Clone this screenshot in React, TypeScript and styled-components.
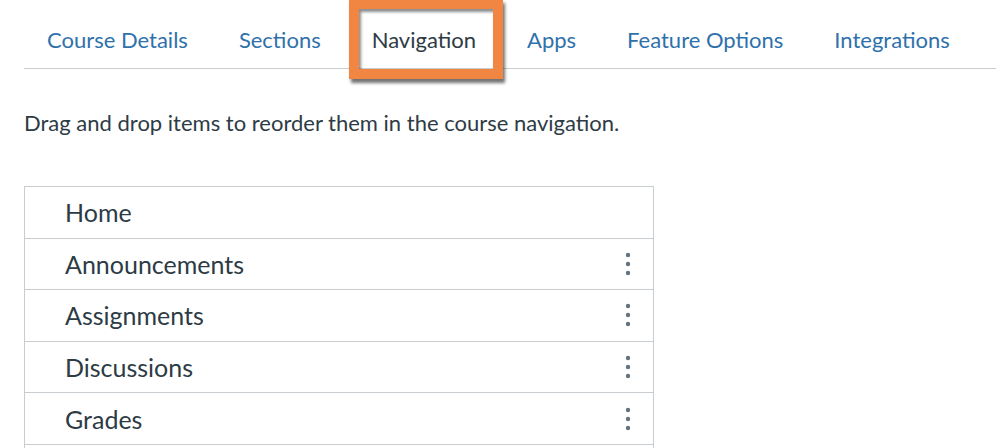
import styled, { createGlobalStyle } from 'styled-components';

const GlobalStyle = createGlobalStyle`
  html, body {
    margin: 0;
    padding: 0;
    background: #fff;
  }
  body {
    font-family: Lato, "Noto Sans", sans-serif;
    color: #2d3b45;
    overflow: hidden;
  }
`;

const Page = styled.div`
  padding-left: 24px;
  width: 972px;
  height: 448px;
  overflow: hidden;
`;

const TabBar = styled.nav`
  display: flex;
  padding-top: 24px;
  border-bottom: 1px solid #c7cdd1;
`;

const Tab = styled.a<{ $active?: boolean }>`
  position: relative;
  display: block;
  padding: 0 25.5px 12px;
  font-size: 22px;
  line-height: 32px;
  text-decoration: none;
  color: ${(p) => (p.$active ? '#2d3b45' : '#2f71ab')};
  white-space: nowrap;

  &:first-child {
    padding-left: 23px;
  }
`;

// annotation frame drawn over the active tab
const Highlight = styled.span`
  position: absolute;
  left: 3px;
  right: -1px;
  top: -25px;
  height: 80px;
  box-sizing: border-box;
  border: 10px solid #f08641;
  box-shadow: 2px 4px 3px rgba(0, 0, 0, 0.55), inset 2px 3px 3px rgba(0, 0, 0, 0.45);
  pointer-events: none;
`;

const Intro = styled.p`
  margin: 39px 0 0;
  font-size: 22px;
  line-height: 30px;
`;

const NavList = styled.ul`
  list-style: none;
  margin: 48px 0 0;
  padding: 0;
  width: 628px;
  border: 1px solid #c7cdd1;
  border-bottom: none;
`;

const NavItem = styled.li`
  display: flex;
  align-items: center;
  justify-content: space-between;
  height: 50.6px;
  padding: 0 22px 0 40px;
  border-bottom: 1px solid #c7cdd1;
  font-size: 25px;
  color: #2d3b45;
`;

const Kebab = styled.svg`
  width: 6px;
  height: 24px;
  flex: none;
`;

const KebabIcon = () => (
  <Kebab viewBox="0 0 6 24">
    <circle cx="3" cy="3" r="2.2" fill="#66737d" />
    <circle cx="3" cy="12" r="2.2" fill="#66737d" />
    <circle cx="3" cy="21" r="2.2" fill="#66737d" />
  </Kebab>
);

const tabs = ['Course Details', 'Sections', 'Navigation', 'Apps', 'Feature Options', 'Integrations'];
const items = ['Home', 'Announcements', 'Assignments', 'Discussions', 'Grades'];

export default function App() {
  return (
    <>
      <GlobalStyle />
      <Page>
        <TabBar>
          {tabs.map((t) => (
            <Tab key={t} href="#" $active={t === 'Navigation'}>
              {t}
              {t === 'Navigation' && <Highlight />}
            </Tab>
          ))}
        </TabBar>
        <Intro>Drag and drop items to reorder them in the course navigation.</Intro>
        <NavList>
          {items.map((it, i) => (
            <NavItem key={it}>
              <span>{it}</span>
              {i > 0 && <KebabIcon />}
            </NavItem>
          ))}
          <NavItem aria-hidden />
        </NavList>
      </Page>
    </>
  );
}
